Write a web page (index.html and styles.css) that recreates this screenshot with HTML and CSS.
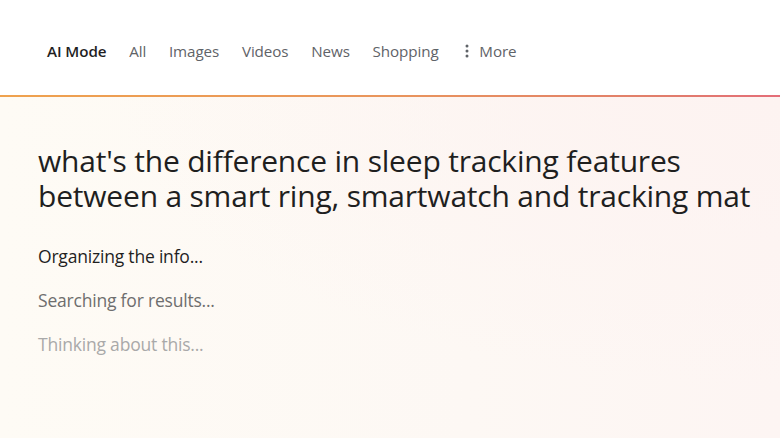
FILE: index.html
```html
<!DOCTYPE html>
<html>
<head>
<meta charset="utf-8">
<link rel="stylesheet" href="styles.css">
</head>
<body>
<header class="nav">
  <span class="tab active">AI Mode</span>
  <span class="tab">All</span>
  <span class="tab">Images</span>
  <span class="tab">Videos</span>
  <span class="tab">News</span>
  <span class="tab">Shopping</span>
  <span class="tab more"><svg class="dots" width="4" height="14" viewBox="0 0 4 14"><circle cx="2" cy="2" r="1.5"/><circle cx="2" cy="7" r="1.5"/><circle cx="2" cy="12" r="1.5"/></svg>More</span>
</header>
<div class="divider"></div>
<main class="content">
  <h1 class="query">what's the difference in sleep tracking features between a smart ring, smartwatch and tracking mat</h1>
  <ul class="steps">
    <li class="step s1">Organizing the info...</li>
    <li class="step s2">Searching for results...</li>
    <li class="step s3">Thinking about this...</li>
  </ul>
</main>
</body>
</html>
```
FILE: styles.css
```css
html, body { margin: 0; padding: 0; }
body {
  width: 780px; height: 438px; overflow: hidden;
  font-family: "Open Sans", "Roboto", sans-serif;
  background: #fff;
  display: flex; flex-direction: column;
}
.nav {
  height: 95px;
  display: flex; align-items: center;
  padding: 6px 0 0 47px;
  gap: 22.8px;
  background: #fff;
  box-sizing: border-box;
}
.tab { font-size: 15.2px; color: #5f6368; display: flex; align-items: center; letter-spacing: -0.1px; }
.tab.active { color: #1f1f1f; font-weight: 600; }
.tab.more { margin-left: 4px; gap: 10px; }
.dots { fill: #5f6368; }
.divider {
  height: 2px;
  background: linear-gradient(90deg, #efa24e 0%, #e9955c 50%, #e17d6b 85%, #e46d78 100%);
}
.content {
  flex: 1;
  padding: 46px 0 0 38px;
  background:
    radial-gradient(ellipse at 100% 0%, #fdf3f1 0%, rgba(253,243,241,0) 60%),
    linear-gradient(90deg, #fefbf5 0%, #fdf8f4 60%, #fdf5f3 100%);
}
.query {
  margin: 0;
  max-width: 725px;
  font-weight: 400;
  font-size: 30px;
  line-height: 35px;
  color: #1f1f1f;
  letter-spacing: -0.2px;
}
.steps { list-style: none; margin: 32px 0 0; padding: 0; display: flex; flex-direction: column; gap: 22px; }
.step { font-size: 17.5px; line-height: 22px; letter-spacing: -0.2px; }
.s1 { color: #1f1f1f; }
.s2 { color: #6e6e6e; }
.s3 { color: #a9a9a9; }
```
